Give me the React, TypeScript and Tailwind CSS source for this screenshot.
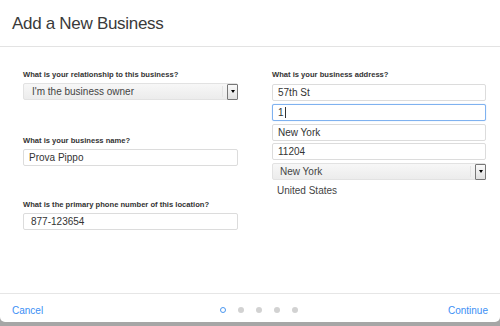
import React from 'react'

const font = { fontFamily: '"Liberation Sans", Arial, sans-serif' }

function Label({ children, mb = 'mb-[3px]' }: { children: React.ReactNode; mb?: string }) {
  return <div className={`text-[7.6px] leading-[10px] font-bold text-[#333] ${mb}`}>{children}</div>
}

function TextBox({ value, focused = false, pl = 'pl-[5px]' }: { value: string; focused?: boolean; pl?: string }) {
  return (
    <div
      className={`h-[17px] flex items-center rounded-[2px] border bg-white text-[10px] text-[#333] ${pl} ${
        focused ? 'border-[#7fb2f0] shadow-[0_0_1px_#9cc4f5]' : 'border-[#dcdcdc]'
      }`}
    >
      {value}
      {focused && <span className="ml-[1px] h-[11px] border-l border-[#333]" />}
    </div>
  )
}

function SelectBox({ value, pl }: { value: string; pl: string }) {
  return (
    <div className="h-[17px] flex items-center rounded-[2px] border border-[#e2e2e2] bg-gradient-to-b from-[#f7f7f7] to-[#ececec] text-[10px] text-[#444]">
      <span className={`flex-1 ${pl}`}>{value}</span>
      <span className="h-[11px] border-l border-[#e4e4e4] mr-[4px]" />
      <span className="w-[11px] h-[16px] -mr-px flex items-center justify-center border border-[#777] rounded-[1px] bg-gradient-to-b from-[#fafafa] to-[#e0e0e0]">
        <span className="w-0 h-0 border-l-[2.5px] border-r-[2.5px] border-t-[3px] border-l-transparent border-r-transparent border-t-black" />
      </span>
    </div>
  )
}

export default function App() {
  return (
    <div className="w-[500px] h-[326px] bg-[#a6a6a6] overflow-hidden" style={font}>
      <div className="h-[322px] bg-white rounded-b-[5px] flex flex-col">
        <div className="h-[47px] border-b border-[#e3e3e3] flex items-center pl-[12px] pt-px">
          <h1 className="text-[17px] tracking-[-0.3px] text-[#3a3a3a]">Add a New Business</h1>
        </div>
        <div className="flex-1 flex pl-[23px] pt-[23px] gap-[34px]">
          <div className="w-[215px] flex flex-col">
            <Label>What is your relationship to this business?</Label>
            <SelectBox value="I'm the business owner" pl="pl-[8px]" />
            <div className="mt-[36px]">
              <Label>What is your business name?</Label>
              <TextBox value="Prova Pippo" />
            </div>
            <div className="mt-[34px]">
              <Label>What is the primary phone number of this location?</Label>
              <TextBox value="877-123654" pl="pl-[7px]" />
            </div>
          </div>
          <div className="w-[214px] flex flex-col">
            <Label mb="mb-[4px]">What is your business address?</Label>
            <div className="flex flex-col gap-[2.75px]">
              <TextBox value="57th St" />
              <TextBox value="1" focused />
              <TextBox value="New York" />
              <TextBox value="11204" />
              <SelectBox value="New York" pl="pl-[7px]" />
              <div className="pl-[5px] text-[10px] text-[#444]">United States</div>
            </div>
          </div>
        </div>
        <div className="h-[29px] border-t border-[#e6e6e6] flex items-center justify-between px-[12px] pt-[4px] text-[10px] text-[#3c8ff5]">
          <span>Cancel</span>
          <div className="flex items-center gap-[12px] ml-[26px]">
            <span className="w-[6px] h-[6px] rounded-full border border-[#4a97f0]" />
            <span className="w-[6px] h-[6px] rounded-full bg-[#d2d2d2]" />
            <span className="w-[6px] h-[6px] rounded-full bg-[#d2d2d2]" />
            <span className="w-[6px] h-[6px] rounded-full bg-[#d2d2d2]" />
            <span className="w-[6px] h-[6px] rounded-full bg-[#d2d2d2]" />
          </div>
          <span>Continue</span>
        </div>
      </div>
    </div>
  )
}
